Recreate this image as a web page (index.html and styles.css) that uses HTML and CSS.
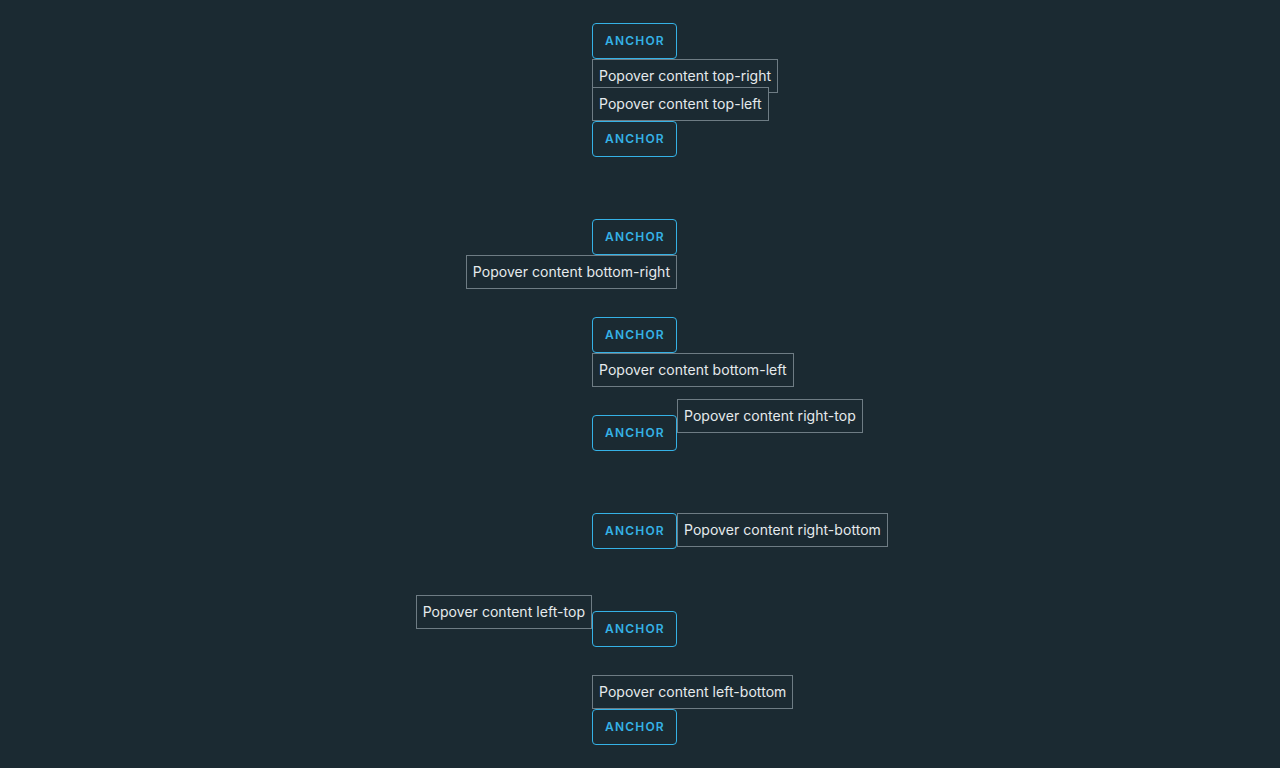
FILE: index.html
```html
<!DOCTYPE html>
<html>
<head>
<meta charset="utf-8">
<link rel="stylesheet" href="styles.css">
</head>
<body>
<main class="stack">
  <div class="cell">
    <button class="btn">Anchor</button>
    <div class="pop pop-top-right">Popover content top-right</div>
  </div>
  <div class="cell">
    <button class="btn">Anchor</button>
    <div class="pop pop-top-left">Popover content top-left</div>
  </div>
  <div class="cell">
    <button class="btn">Anchor</button>
    <div class="pop pop-bottom-right">Popover content bottom-right</div>
  </div>
  <div class="cell">
    <button class="btn">Anchor</button>
    <div class="pop pop-bottom-left">Popover content bottom-left</div>
  </div>
  <div class="cell">
    <button class="btn">Anchor</button>
    <div class="pop pop-right-top">Popover content right-top</div>
  </div>
  <div class="cell">
    <button class="btn">Anchor</button>
    <div class="pop pop-right-bottom">Popover content right-bottom</div>
  </div>
  <div class="cell">
    <button class="btn">Anchor</button>
    <div class="pop pop-left-top">Popover content left-top</div>
  </div>
  <div class="cell">
    <button class="btn">Anchor</button>
    <div class="pop pop-left-bottom">Popover content left-bottom</div>
  </div>
</main>
</body>
</html>
```

FILE: styles.css
```css
html, body {
  margin: 0;
  padding: 0;
  background: #1b2a32;
  height: 100%;
  overflow: hidden;
}
body {
  font-family: Inter, "Open Sans", sans-serif;
  color: #e9ecef;
}
.stack {
  display: flex;
  flex-direction: column;
  align-items: flex-start;
  gap: 62px;
  padding: 23px 0 0 592px;
}
.cell {
  position: relative;
  height: 36px;
}
.btn {
  box-sizing: border-box;
  height: 36px;
  width: 85px;
  padding: 0 12px;
  border: 1px solid #35b2e6;
  border-radius: 4px;
  background: transparent;
  color: #35b2e6;
  font-family: Inter, "Open Sans", sans-serif;
  font-size: 12px;
  font-weight: 600;
  letter-spacing: 0.1em;
  text-transform: uppercase;
  line-height: 34px;
  display: block;
}
.pop {
  position: absolute;
  box-sizing: border-box;
  height: 34px;
  padding: 0 6px;
  border: 1px solid #6e7c84;
  background: #1b2a32;
  font-size: 14px;
  line-height: 32px;
  letter-spacing: 0.04px;
  white-space: nowrap;
  color: #e6eaed;
}
.pop-top-right { left: 0; top: 36px; }
.pop-top-left { left: 0; bottom: 36px; }
.pop-bottom-right { right: 0; top: 36px; }
.pop-bottom-left { left: 0; top: 36px; }
.pop-right-top { left: 85px; bottom: 18px; }
.pop-right-bottom { left: 85px; top: 0; }
.pop-left-top { right: 85px; bottom: 18px; }
.pop-left-bottom { left: 0; bottom: 36px; }
```
